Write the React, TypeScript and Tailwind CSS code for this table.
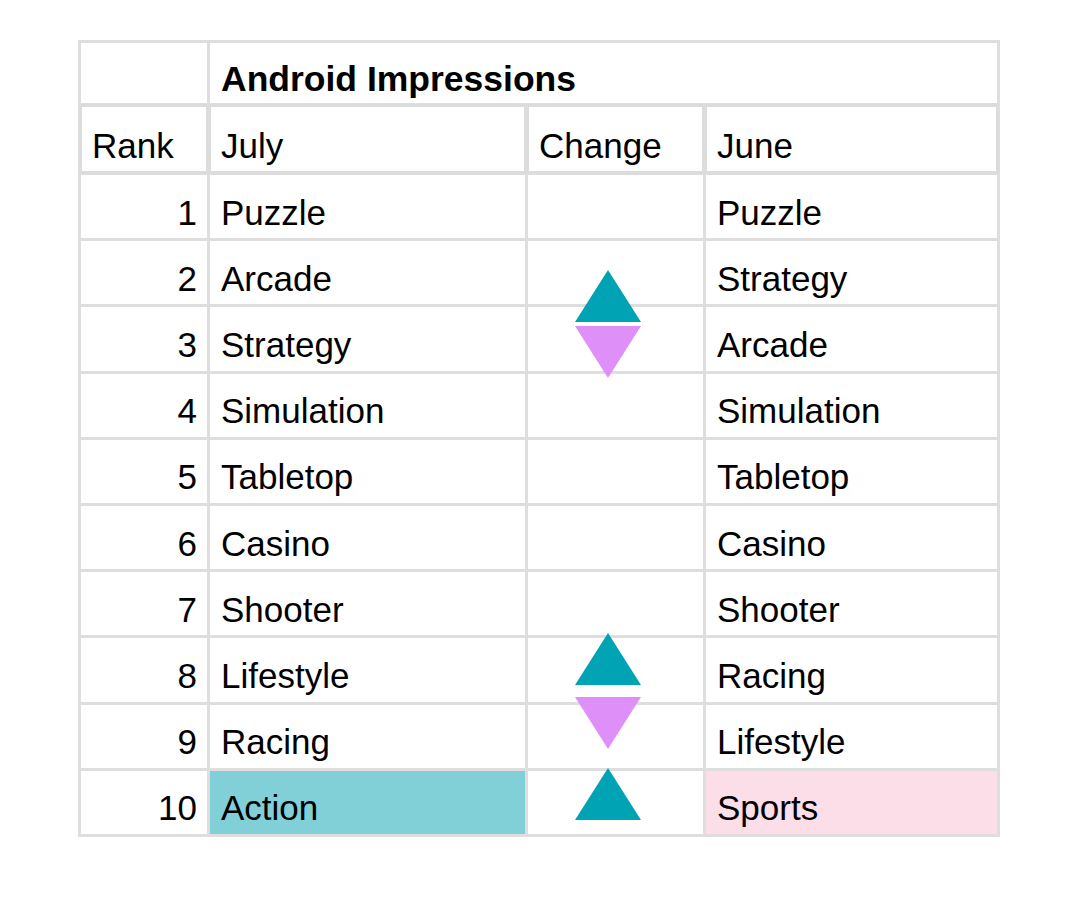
import React from 'react';

type Row = { rank: number; july: string; june: string; julyBg?: string; juneBg?: string };

const rows: Row[] = [
  { rank: 1, july: 'Puzzle', june: 'Puzzle' },
  { rank: 2, july: 'Arcade', june: 'Strategy' },
  { rank: 3, july: 'Strategy', june: 'Arcade' },
  { rank: 4, july: 'Simulation', june: 'Simulation' },
  { rank: 5, july: 'Tabletop', june: 'Tabletop' },
  { rank: 6, july: 'Casino', june: 'Casino' },
  { rank: 7, july: 'Shooter', june: 'Shooter' },
  { rank: 8, july: 'Lifestyle', june: 'Racing' },
  { rank: 9, july: 'Racing', june: 'Lifestyle' },
  { rank: 10, july: 'Action', june: 'Sports', julyBg: 'bg-[#81d0d8]', juneBg: 'bg-[#fcdee9]' },
];

const Up: React.FC<{ className: string }> = ({ className }) => (
  <svg className={`absolute ${className}`} width="66" height="52" viewBox="0 0 66 52">
    <polygon points="33,0 66,52 0,52" fill="#00a3b4" />
  </svg>
);

const Down: React.FC<{ className: string }> = ({ className }) => (
  <svg className={`absolute ${className}`} width="66" height="52" viewBox="0 0 66 52">
    <polygon points="0,0 66,0 33,52" fill="#df90f8" />
  </svg>
);

const headCell =
  'relative z-10 bg-white flex items-end pb-[9px] px-[11px] shadow-[inset_0_0_0_1px_#dcdcdc,0_0_0_2px_#dcdcdc]';

const App: React.FC = () => {
  return (
    <div className="min-h-screen w-full bg-white pt-[40px] pl-[78px] font-['Liberation_Sans',Arial,sans-serif] text-black">
      <div className="relative w-fit">
        <div className="grid grid-cols-[126px_315px_175px_291px] grid-rows-[60px_66px_repeat(10,63.2px)] gap-[3px] p-[3px] bg-[#dedede] text-[35px] leading-none">
          <div className="bg-white" />
          <div className="col-span-3 bg-white flex items-end pb-[6px] px-[11px] text-[35.5px] font-bold">
            Android Impressions
          </div>

          <div className={headCell}>Rank</div>
          <div className={headCell}>July</div>
          <div className={headCell}>Change</div>
          <div className={headCell}>June</div>

          {rows.map((r) => (
            <React.Fragment key={r.rank}>
              <div className="bg-white flex items-center justify-end pr-[10px] pt-[11px]">{r.rank}</div>
              <div className={`${r.julyBg ?? 'bg-white'} flex items-center px-[11px] pt-[11px]`}>{r.july}</div>
              <div className="bg-white" />
              <div className={`${r.juneBg ?? 'bg-white'} flex items-center px-[11px] pt-[11px]`}>{r.june}</div>
            </React.Fragment>
          ))}
        </div>

        <Up className="left-[497px] top-[230px]" />
        <Down className="left-[497px] top-[286px]" />
        <Up className="left-[497px] top-[593px]" />
        <Down className="left-[497px] top-[657px]" />
        <Up className="left-[497px] top-[728px]" />
      </div>
    </div>
  );
};

export default App;
